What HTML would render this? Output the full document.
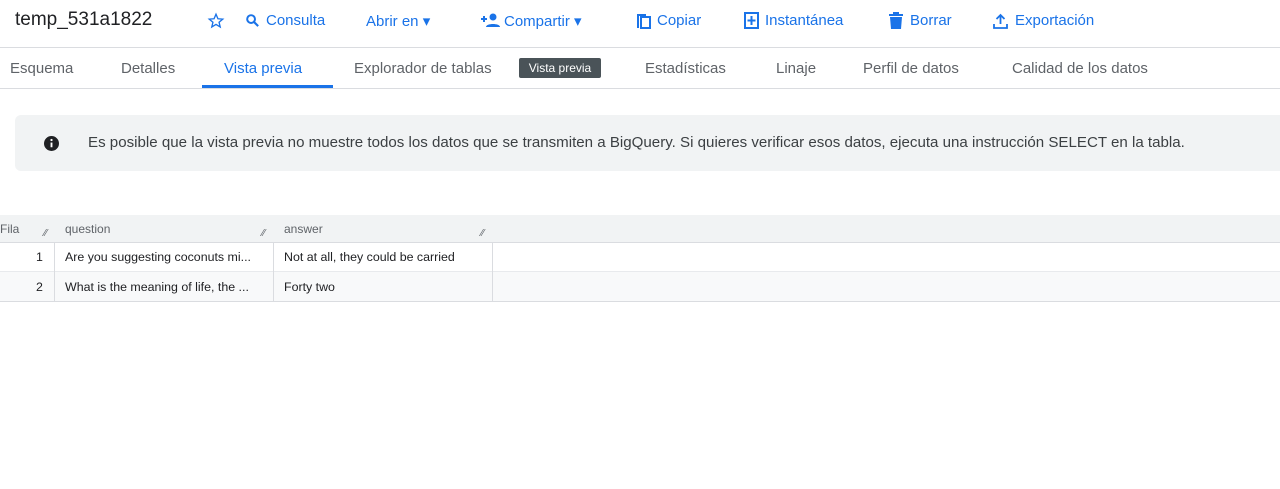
<!DOCTYPE html>
<html><head><meta charset="utf-8"><style>
*{box-sizing:border-box;margin:0;padding:0}
body{width:1280px;height:489px;background:#fff;font-family:"Liberation Sans",Roboto,sans-serif;position:relative;overflow:hidden;color:#3c4043}
.a{position:absolute;white-space:nowrap}
.tb{color:#1a73e8;font-size:15px;top:12px}
.tab{font-size:15px;top:60px;color:#5f6368}
svg{position:absolute}
.hd{font-size:12px;color:#5f6368;top:222px}
.c{font-size:12.4px;color:#202124}
</style></head><body>
<div class="a" style="left:15px;top:9px;font-size:19px;color:#202124">temp_531a1822</div>
<svg style="left:207px;top:12px" width="18" height="18" viewBox="0 0 24 24"><path d="M12 3l2.6 6 6.4.5-4.9 4.2 1.5 6.3L12 16.6 6.4 20l1.5-6.3L3 9.5l6.4-.5z" fill="none" stroke="#1a73e8" stroke-width="1.8"/></svg>
<svg style="left:244px;top:12px" width="17" height="17" viewBox="0 0 24 24"><circle cx="10" cy="10" r="5.5" fill="none" stroke="#1a73e8" stroke-width="2.8"/><path d="M14 14l6 6" stroke="#1a73e8" stroke-width="3"/></svg>
<div class="a tb" style="left:266px">Consulta</div>
<div class="a tb" style="left:366px">Abrir en ▾</div>
<svg style="left:480px;top:12px" width="20" height="16" viewBox="0 0 20 16"><path d="M1 7h6M4 4v6" stroke="#1a73e8" stroke-width="2"/><circle cx="13" cy="5" r="3.5" fill="#1a73e8"/><path d="M6 15c0-4 14-4 14 0z" fill="#1a73e8"/></svg>
<div class="a tb" style="left:504px">Compartir ▾</div>
<svg style="left:636px;top:13px" width="15" height="16" viewBox="0 0 15 16"><path d="M1 1h9v2H3v12H1z" fill="#1a73e8"/><rect x="5" y="4" width="9" height="11" fill="none" stroke="#1a73e8" stroke-width="2"/></svg>
<div class="a tb" style="left:657px">Copiar</div>
<svg style="left:744px;top:12px" width="15" height="17" viewBox="0 0 15 17"><rect x="1" y="1" width="13" height="15" fill="none" stroke="#1a73e8" stroke-width="2"/><path d="M7.5 4v9M3.5 8.5h8" stroke="#1a73e8" stroke-width="2"/></svg>
<div class="a tb" style="left:765px">Instantánea</div>
<svg style="left:889px;top:12px" width="14" height="17" viewBox="0 0 14 17"><path d="M0 2h14v2H0zM4 0h6v2H4zM1 5h12l-1 12H2z" fill="#1a73e8"/></svg>
<div class="a tb" style="left:910px">Borrar</div>
<svg style="left:993px;top:13px" width="15" height="16" viewBox="0 0 15 16"><path d="M7.5 2v9M3.5 6l4-4 4 4M1 11v4h13v-4" fill="none" stroke="#1a73e8" stroke-width="1.8"/></svg>
<div class="a tb" style="left:1015px">Exportación</div>
<div class="a" style="left:0;top:47px;width:1280px;height:1px;background:#dadce0"></div>
<div class="a tab" style="left:10px">Esquema</div>
<div class="a tab" style="left:121px">Detalles</div>
<div class="a tab" style="left:224px;color:#1a73e8">Vista previa</div>
<div class="a tab" style="left:354px">Explorador de tablas</div>
<div class="a" style="left:519px;top:58px;width:82px;height:20px;background:#4a5358;color:#fff;font-size:12px;line-height:20px;text-align:center;border-radius:2px">Vista previa</div>
<div class="a tab" style="left:645px">Estadísticas</div>
<div class="a tab" style="left:776px">Linaje</div>
<div class="a tab" style="left:863px">Perfil de datos</div>
<div class="a tab" style="left:1012px">Calidad de los datos</div>
<div class="a" style="left:202px;top:85px;width:131px;height:3px;background:#1a73e8"></div>
<div class="a" style="left:0;top:88px;width:1280px;height:1px;background:#dadce0"></div>
<div class="a" style="left:15px;top:115px;width:1280px;height:56px;background:#f1f3f4;border-radius:6px"></div>
<svg style="left:44px;top:136px" width="15" height="15" viewBox="0 0 16 16"><circle cx="8" cy="8" r="8" fill="#202124"/><path d="M8 7v5" stroke="#fff" stroke-width="2"/><circle cx="8" cy="4.3" r="1.2" fill="#fff"/></svg>
<div class="a" style="left:88px;top:134px;font-size:15.1px;color:#3c4043">Es posible que la vista previa no muestre todos los datos que se transmiten a BigQuery. Si quieres verificar esos datos, ejecuta una instrucción SELECT en la tabla.</div>
<div class="a" style="left:0;top:215px;width:1280px;height:28px;background:#f1f3f4;border-bottom:1px solid #dadce0"></div>
<div class="a hd" style="left:0">Fila</div>
<div class="a hd" style="left:65px">question</div>
<div class="a hd" style="left:284px">answer</div>
<div class="a hd" style="left:44px;top:228px;font-size:10px">⁄⁄</div>
<div class="a hd" style="left:262px;top:228px;font-size:10px">⁄⁄</div>
<div class="a hd" style="left:481px;top:228px;font-size:10px">⁄⁄</div>
<div class="a" style="left:0;top:272px;width:1280px;height:29px;background:#f8f9fa"></div>
<div class="a" style="left:0;top:271px;width:1280px;height:1px;background:#e8eaed"></div>
<div class="a" style="left:0;top:301px;width:1280px;height:1px;background:#dadce0"></div>
<div class="a" style="left:54px;top:243px;width:1px;height:58px;background:#dadce0"></div>
<div class="a" style="left:273px;top:243px;width:1px;height:58px;background:#dadce0"></div>
<div class="a" style="left:492px;top:243px;width:1px;height:58px;background:#dadce0"></div>
<div class="a c" style="left:36px;top:250px">1</div>
<div class="a c" style="left:65px;top:250px">Are you suggesting coconuts mi...</div>
<div class="a c" style="left:284px;top:250px">Not at all, they could be carried</div>
<div class="a c" style="left:36px;top:280px">2</div>
<div class="a c" style="left:65px;top:280px">What is the meaning of life, the ...</div>
<div class="a c" style="left:284px;top:280px">Forty two</div>
</body></html>
